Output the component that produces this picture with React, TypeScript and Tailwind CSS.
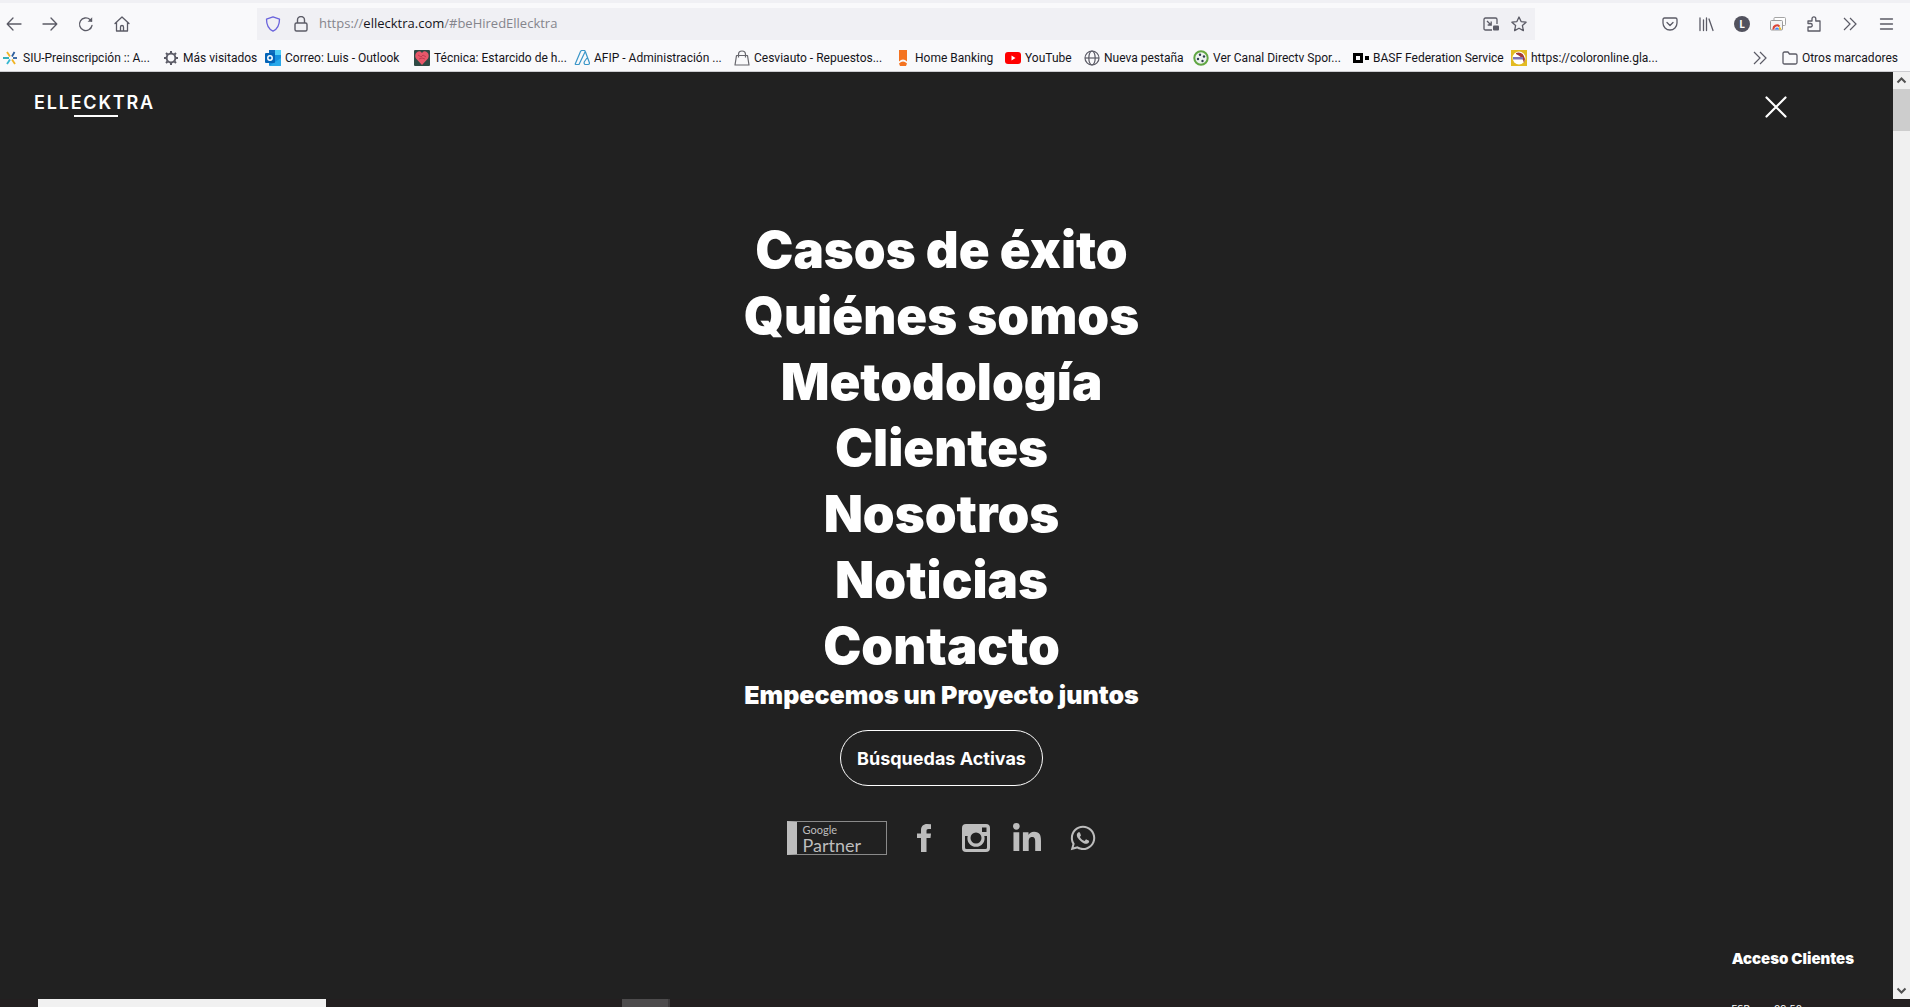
import type { ReactNode } from 'react';
import { FaLinkedinIn, FaWhatsapp } from 'react-icons/fa';

type Bookmark = { label: string; width: string; icon: ReactNode };

const bookmarks: Bookmark[] = [
  {
    label: 'SIU-Preinscripción :: A...',
    width: 'w-[160px]',
    icon: (
      <svg viewBox="0 0 16 16" className="size-4 shrink-0" strokeWidth="1.800" fill="none">
        <path d="M0 8h6" stroke="#1fa8b4" />
        <path d="M10 8h4" stroke="#2c5f9e" />
        <path d="M4 2l3 4.500" stroke="#f0b323" />
        <path d="M9 9.500l3 4.500" stroke="#f0b323" />
        <path d="M11.500 2L9 6.500" stroke="#2c5f9e" />
        <path d="M7 9.500L4 14" stroke="#35b7d0" />
      </svg>
    ),
  },
  {
    label: 'Más visitados',
    width: 'w-[102px]',
    icon: (
      <svg viewBox="0 0 16 16" className="size-4 shrink-0" fill="none" stroke="#5b5b66">
        <circle cx="8" cy="8" r="4.400" strokeWidth="2" />
        <path strokeWidth="2" d="M8 1v2M8 13v2M1 8h2M13 8h2M3 3l1.500 1.500M11.500 11.500L13 13M13 3l-1.500 1.500M4.500 11.500L3 13" />
      </svg>
    ),
  },
  {
    label: 'Correo: Luis - Outlook',
    width: 'w-[149px]',
    icon: (
      <svg viewBox="0 0 16 16" className="size-4 shrink-0">
        <rect x="4" y="0" width="12" height="16" rx="1" fill="#1490df" />
        <rect x="10" y="0" width="6" height="5" fill="#50d0f8" />
        <rect x="4" y="0" width="6" height="4" fill="#0f6cbd" />
        <path d="M4 16L16 8v7a1 1 0 0 1-1 1z" fill="#28a8ea" />
        <rect x="0" y="3" width="10" height="10" rx="1" fill="#0364b8" />
        <circle cx="5" cy="8" r="2.200" fill="none" stroke="#fff" strokeWidth="1.500" />
      </svg>
    ),
  },
  {
    label: 'Técnica: Estarcido de h...',
    width: 'w-[160px]',
    icon: (
      <svg viewBox="0 0 16 16" className="size-4 shrink-0">
        <rect width="16" height="16" rx="1" fill="#2f4a45" />
        <path d="M8 15L2 8.500C0 5 2.500 1 5.500 1.200 7 1.300 8 3 8 3s1-1.700 2.500-1.800C13.500 1 16 5 14 8.500z" fill="#e8586a" />
        <path d="M4 5l3 2 2-2 3 2M5 9l3-1 3 1" stroke="#c23c50" fill="none" />
      </svg>
    ),
  },
  {
    label: 'AFIP - Administración ...',
    width: 'w-[160px]',
    icon: (
      <svg viewBox="0 0 16 16" className="size-4 shrink-0" fill="none" stroke="#3a96c8" strokeWidth="1.200" strokeLinejoin="round">
        <path d="M1 14.500L6.500 1.500q.5-1 1.500-1h2q1 0 1.300 1L15.500 13q0 1.500-1.500 1.500h-3q-1.500-1-.5-3L13 8M1 14.500h4L11 2" />
      </svg>
    ),
  },
  {
    label: 'Cesviauto - Repuestos...',
    width: 'w-[161px]',
    icon: (
      <svg viewBox="0 0 16 16" className="size-4 shrink-0" fill="none" stroke="#66666c" strokeWidth="1.200" strokeLinejoin="round">
        <path d="M2.500 5.500h11l1.500 9.500H1zM4.500 7.500V4.500a3.500 3.500 0 0 1 7 0v3" />
      </svg>
    ),
  },
  {
    label: 'Home Banking',
    width: 'w-[110px]',
    icon: (
      <svg viewBox="0 0 16 16" className="size-4 shrink-0" fill="#f47321">
        <path d="M4 0h8v11.500q-4-4-8 0z" />
        <path d="M4 13.500q4-4 8 0l-1 2.500H5z" />
      </svg>
    ),
  },
  {
    label: 'YouTube',
    width: 'w-[79px]',
    icon: (
      <svg viewBox="0 0 16 16" className="size-4 shrink-0">
        <rect x="0" y="2" width="16" height="12" rx="3" fill="#f00" />
        <path d="M6.500 5.500v5l4-2.500z" fill="#fff" />
      </svg>
    ),
  },
  {
    label: 'Nueva pestaña',
    width: 'w-[109px]',
    icon: (
      <svg viewBox="0 0 16 16" className="size-4 shrink-0" fill="none" stroke="#5b5b66" strokeWidth="1.200">
        <circle cx="8" cy="8" r="7" />
        <ellipse cx="8" cy="8" rx="3.200" ry="7" />
        <path d="M1 8h14" />
      </svg>
    ),
  },
  {
    label: 'Ver Canal Directv Spor...',
    width: 'w-[160px]',
    icon: (
      <svg viewBox="0 0 16 16" className="size-4 shrink-0">
        <circle cx="8" cy="8" r="6.700" fill="#eef2f0" stroke="#61a744" strokeWidth="2" />
        <g fill="#2d3f50">
          <circle cx="7" cy="4.800" r="1.200" />
          <circle cx="11" cy="6.500" r="1.200" />
          <circle cx="5" cy="9" r="1.200" />
          <circle cx="9.500" cy="11" r="1.200" />
        </g>
      </svg>
    ),
  },
  {
    label: 'BASF Federation Service',
    width: 'w-[158px]',
    icon: (
      <svg viewBox="0 0 16 16" className="size-4 shrink-0">
        <rect x="1.500" y="4.500" width="7" height="7" fill="none" stroke="#000" strokeWidth="3" />
        <rect x="12" y="6" width="4" height="4" />
      </svg>
    ),
  },
  {
    label: 'https://coloronline.gla...',
    width: 'w-[160px]',
    icon: (
      <svg viewBox="0 0 16 16" className="size-4 shrink-0">
        <rect width="16" height="16" fill="#e3bb22" />
        <circle cx="8" cy="8" r="6.500" fill="#fff" />
        <path d="M5 3q7-2 9 6l-1 4q-1-6-8-9z" fill="#a33a35" />
        <path d="M2 7h10v2.500H2z" fill="#7d74b8" />
      </svg>
    ),
  },
];

const chromeIcon = 'size-4 shrink-0';

function ChevronsIcon() {
  return (
    <svg viewBox="0 0 16 16" className={chromeIcon} fill="none" stroke="#5b5b66" strokeWidth="1.200">
      <path d="M2 2l6 6-6 6M8 2l6 6-6 6" />
    </svg>
  );
}

function ToolButton({ label, children }: { label: string; children: ReactNode }) {
  return (
    <button type="button" aria-label={label} className="flex w-9 items-center justify-center">
      {children}
    </button>
  );
}

function StrokeIcon({ children }: { children: ReactNode }) {
  return (
    <svg viewBox="0 0 16 16" className={chromeIcon} fill="none" stroke="#5b5b66" strokeWidth="1.300" strokeLinecap="round" strokeLinejoin="round">
      {children}
    </svg>
  );
}

function Toolbar() {
  return (
    <div className="flex h-10 items-center pr-1.5">
      <div className="-ml-1 flex">
        <ToolButton label="Atrás">
          <StrokeIcon><path d="M15 8H1.500M7 2L1.200 8 7 14" /></StrokeIcon>
        </ToolButton>
        <ToolButton label="Adelante">
          <StrokeIcon><path d="M1 8h13.500M9 2l5.800 6L9 14" /></StrokeIcon>
        </ToolButton>
        <ToolButton label="Recargar">
          <StrokeIcon>
            <path d="M14 9.500A6.300 6.300 0 1 1 12 3.500l1.500 1.500" />
            <path d="M14.200 1.200v4.600H9.600z" fill="#5b5b66" stroke="none" />
          </StrokeIcon>
        </ToolButton>
        <ToolButton label="Inicio">
          <StrokeIcon><path d="M1 7.500L8 1l7 6.500M2.500 6.500V15h11V6.500M6.500 15v-4a1.500 1.500 0 0 1 3 0v4" /></StrokeIcon>
        </ToolButton>
      </div>
      <div className="mr-[117px] ml-[117px] flex h-8 flex-1 items-center bg-[#f0f0f4] px-2">
        <svg viewBox="0 0 16 16" className="size-4 shrink-0" fill="none" stroke="#6a63dc" strokeWidth="1.300" strokeLinejoin="round">
          <path d="M8 .8l6.500 2.400C14.500 9 12.500 13 8 15.200 3.500 13 1.500 9 1.500 3.200z" />
        </svg>
        <svg viewBox="0 0 16 16" className="ml-3 size-4 shrink-0" fill="none" stroke="#5b5b66" strokeWidth="1.400">
          <rect x="2" y="7" width="12" height="8" rx="1.500" />
          <path d="M4.500 7V4a3.500 3.500 0 0 1 7 0v3" />
        </svg>
        <div className="relative ml-2 h-8 flex-1">
          <input aria-label="Dirección" defaultValue="https://ellecktra.com/#beHiredEllecktra" className="size-full bg-transparent px-1 text-[13px] text-transparent outline-none" />
          <div aria-hidden="true" className="pointer-events-none absolute inset-0 flex items-center px-0.5 text-[13px] text-[#85858c]">
            https://<span className="text-[#15141a]">ellecktra.com</span>/#beHiredEllecktra
          </div>
        </div>
        <svg viewBox="0 0 16 16" className="size-4 shrink-0" fill="none" stroke="#5b5b66" strokeWidth="1.300">
          <path d="M9 14H2.500Q1 14 1 12.500v-9Q1 2 2.500 2h10Q14 2 14 3.500V8M4 5l4 4M8.200 5.500V9H4.700" />
          <rect x="10" y="9.500" width="6" height="5" rx="1" fill="#5b5b66" stroke="none" />
        </svg>
        <svg viewBox="0 0 16 16" className="ml-3 size-4 shrink-0" fill="none" stroke="#5b5b66" strokeWidth="1.300" strokeLinejoin="round">
          <path d="M8 1l2.100 4.600 5 .6-3.700 3.400 1 5L8 12.200 3.600 14.600l1-5L.9 6.200l5-.6z" />
        </svg>
      </div>
      <div className="flex">
        <ToolButton label="Guardar en Pocket">
          <StrokeIcon><path d="M2.500 2h11Q15 2 15 3.500V7A7 7 0 0 1 1 7V3.500Q1 2 2.500 2zM5 6.500l3 3 3-3" /></StrokeIcon>
        </ToolButton>
        <ToolButton label="Catálogo">
          <StrokeIcon><path d="M2 2v12.500M5.500 4v10.500M8.500 2v12.500M11 3l4 11.500" /></StrokeIcon>
        </ToolButton>
        <ToolButton label="Cuenta">
          <span className="flex size-4 items-center justify-center rounded-full bg-[#52525e] text-[10px] font-bold text-white">L</span>
        </ToolButton>
        <ToolButton label="Capturas">
          <svg viewBox="0 0 16 16" className={chromeIcon} fill="none">
            <rect x="4" y="1.500" width="11.500" height="8" rx="1" fill="#fff" stroke="#a5a5a5" />
            <rect x=".5" y="4.500" width="12" height="9.500" rx="1" fill="#f4f4f4" stroke="#9b9b9b" />
            <path d="M3.500 13.500a3.500 3.500 0 0 1 6-3" stroke="#db4437" strokeWidth="2" />
            <path d="M5 13.500a2 2 0 0 1 4 0z" fill="#4285f4" />
            <path d="M9.500 10l2 3.500H9z" fill="#f4b400" />
          </svg>
        </ToolButton>
        <ToolButton label="Extensiones">
          <StrokeIcon><path d="M2 15V11h2.500a1.600 1.600 0 0 0 0-3.500H2V5h4V2.800a1.900 1.900 0 0 1 3.800 0V5H14v10z" /></StrokeIcon>
        </ToolButton>
        <ToolButton label="Más herramientas"><ChevronsIcon /></ToolButton>
        <ToolButton label="Menú">
          <StrokeIcon><path d="M2.500 3h12M2.500 8h12M2.500 13h12" /></StrokeIcon>
        </ToolButton>
      </div>
    </div>
  );
}

function BookmarksBar() {
  return (
    <nav aria-label="Marcadores" className="flex h-[27px] items-center font-['Roboto',sans-serif] text-[12px] text-[#15141a]">
      <div className="flex min-w-0 flex-1 overflow-hidden pl-[3px]">
        {bookmarks.map((b) => (
          <a key={b.label} href="#" className={'flex shrink-0 items-center gap-1 whitespace-nowrap ' + b.width}>
            {b.icon}
            {b.label}
          </a>
        ))}
      </div>
      <button type="button" aria-label="Más marcadores" className="mr-3.5"><ChevronsIcon /></button>
      <a href="#" className="mr-3 flex items-center gap-1 whitespace-nowrap">
        <StrokeIcon><path d="M1 3.500Q1 2 2.500 2H6l1.500 2H13.500Q15 4 15 5.500v7Q15 14 13.500 14h-11Q1 14 1 12.500z" /></StrokeIcon>
        Otros marcadores
      </a>
    </nav>
  );
}

const menu = ['Casos de éxito', 'Quiénes somos', 'Metodología', 'Clientes', 'Nosotros', 'Noticias', 'Contacto'];

function SiteMenu() {
  return (
    <main className="flex min-w-0 flex-1 flex-col bg-[#212121] font-['Inter',sans-serif] text-white">
      <header className="flex items-start justify-between pt-[23px] pr-[106px] pl-[34px]">
        <a href="#" aria-label="Ellecktra" className="flex flex-col text-[18px] leading-4 font-semibold tracking-widest">
          ELLECKTRA
          <span className="mt-1 ml-10 h-0.5 w-11 bg-white" />
        </a>
        <button type="button" aria-label="Cerrar" className="pt-px">
          <svg viewBox="0 0 22 22" className="size-[22px]" stroke="#fff" strokeWidth="2.200" strokeLinecap="round">
            <path d="M1.500 1.500l19 19M20.500 1.500l-19 19" />
          </svg>
        </button>
      </header>
      <div className="flex flex-col items-center pt-[99px] pr-2.5">
        <nav className="flex flex-col items-center text-[51px] leading-[66px] font-black">
          {menu.map((m) => (
            <a key={m} href="#">{m}</a>
          ))}
        </nav>
        <p className="text-[25px] leading-8 font-black">Empecemos un Proyecto juntos</p>
        <button type="button" className="mt-[19px] h-14 rounded-full border border-white px-4 text-[18px] font-bold">Búsquedas Activas</button>
        <div className="mt-[35px] flex items-center text-[#bdbdbd]">
          <a href="#" className="flex h-[34px] w-[100px] flex-col justify-center border border-l-[10px] border-[#8a8a8a] border-l-[#bdbdbd] pl-1.5 font-['Lato',sans-serif]">
            <span className="text-[11px] leading-[13px]">Google</span>
            <span className="text-[18px] leading-[18px]">Partner</span>
          </a>
          <a href="#" aria-label="Facebook" className="ml-[30px]">
            <svg viewBox="0 0 14 28" className="h-7 w-3.5" fill="currentColor">
              <path d="M14 .2V5h-2.500C9.800 5 9.500 5.800 9.500 7v2.500H14l-.5 4.500h-4v14H4V14H0V9.500h4V6.200C4 2.200 6.500 0 10 0z" />
            </svg>
          </a>
          <a href="#" aria-label="Instagram" className="ml-[31px]">
            <svg viewBox="0 0 28 28" className="size-7" fill="currentColor">
              <path fillRule="evenodd" d="M4 0h20a4 4 0 0 1 4 4v20a4 4 0 0 1-4 4H4a4 4 0 0 1-4-4V4a4 4 0 0 1 4-4zM20 3.500v4.500h4.500V3.500zM3 12v11.500A1.500 1.500 0 0 0 4.500 25h19a1.500 1.500 0 0 0 1.500-1.500V12h-2.700A8.600 8.600 0 1 1 5.700 12z" />
              <circle cx="14" cy="14" r="5.500" fill="#212121" />
            </svg>
          </a>
          <a href="#" aria-label="LinkedIn" className="ml-[21px] pt-0.5"><FaLinkedinIn className="size-8" /></a>
          <a href="#" aria-label="WhatsApp" className="ml-[26px]"><FaWhatsapp className="size-7" /></a>
        </div>
      </div>
      <a href="#" className="mt-auto mr-[39px] mb-8 self-end text-[15px] leading-4 font-black">Acceso Clientes</a>
    </main>
  );
}

function Scrollbar() {
  return (
    <div aria-hidden="true" className="flex w-[17px] shrink-0 flex-col items-center bg-[#f0f0f0]">
      <svg viewBox="0 0 17 17" className="size-[17px]" fill="none" stroke="#505050" strokeWidth="2"><path d="M4.500 10.500l4-4 4 4" /></svg>
      <div className="h-[42px] w-full bg-[#cdcdcd]" />
      <svg viewBox="0 0 17 17" className="mt-auto size-[17px]" fill="none" stroke="#505050" strokeWidth="2"><path d="M4.500 6.500l4 4 4-4" /></svg>
    </div>
  );
}

export default function App() {
  return (
    <div className="flex h-screen flex-col overflow-hidden bg-[#f9f9fb] font-['Open_Sans',sans-serif]">
      <div className="h-1 shrink-0 border-b border-[#f9f9fb] bg-[#f0f0f4]" />
      <div className="shrink-0 border-b border-[#ccccd0]">
        <Toolbar />
        <BookmarksBar />
      </div>
      <div className="flex min-h-0 flex-1">
        <SiteMenu />
        <Scrollbar />
      </div>
      <footer className="flex h-2 shrink-0 items-start overflow-hidden bg-[#231f20] pl-[38px] text-[11px] leading-4 text-white">
        <div className="h-2 w-72 bg-[#f1f1f1]" />
        <div className="ml-[296px] h-2 w-12 border-r-2 border-[#3c3a3b] bg-[#4d4b4c]" />
        <div className="mt-0.5 mr-[108px] ml-auto flex gap-6">
          <span>ESP</span>
          <span>09:50</span>
        </div>
      </footer>
    </div>
  );
}
